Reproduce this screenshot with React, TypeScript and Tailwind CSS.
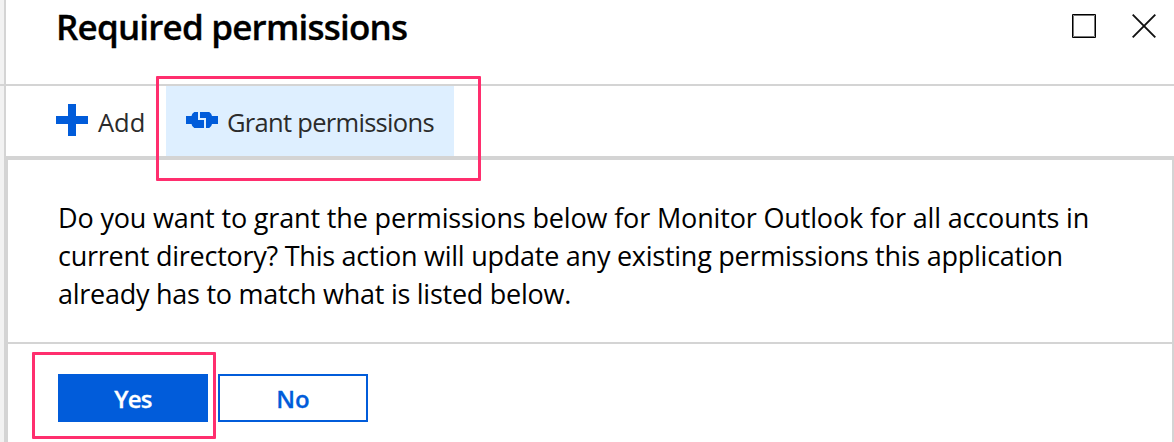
function PlusIcon() {
  return (
    <svg className="size-8 shrink-0" viewBox="0 0 32 32" fill="#015cda">
      <path d="M12 0h8v12h12v8H20v12h-8V20H0v-8h12z" />
    </svg>
  );
}

function ConnectIcon() {
  return (
    <svg className="h-4 w-8 shrink-0" viewBox="0 0 32 16" fill="#015cda">
      <path d="M0 4h5.500Q5.800 1.500 8.300 0H12v8h6v8H8.300Q5.800 14.500 5.500 12H0z" />
      <path d="M14 0h9.200Q25.700 1.500 26 4h6v8h-6Q25.700 14.500 23.200 16H20V6h-6z" />
    </svg>
  );
}

const message = [
  { text: "Do you want to grant the permissions below for Monitor Outlook for all accounts in", spacing: "tracking-[-0.156px]" },
  { text: "current directory? This action will update any existing permissions this application", spacing: "tracking-[-0.25px]" },
  { text: "already has to match what is listed below.", spacing: "tracking-[-0.26px]" },
];

export default function App() {
  return (
    <div className="relative flex h-[442px] w-[1174px] overflow-hidden bg-white font-['Open_Sans','Noto_Sans',sans-serif] text-black">
      <div className="flex w-1 shrink-0 flex-col bg-[#f2f2f2]">
        <div className="mt-[84px] h-0.5 bg-[#d4d4d4]" />
      </div>
      <main className="flex min-w-0 flex-1 flex-col border-l-2 border-[#d4d4d4]">
        <header className="flex h-[86px] shrink-0 items-start justify-between border-b-2 border-[#d4d4d4] pl-[50px] pr-[18px]">
          <h1 className="mt-[3px] whitespace-nowrap text-[35px] font-semibold leading-[48px] tracking-[-0.8px] [-webkit-text-stroke:0.3px_#000]">
            Required permissions
          </h1>
          <div className="mt-[14px] flex gap-[36px]">
            <button aria-label="Maximize">
              <svg className="size-6" viewBox="0 0 24 24" fill="none">
                <path d="M1.500 1.500h21v21h-21z" stroke="#777" />
                <path d="M.5.5h23v23H.5z" stroke="#000" />
              </svg>
            </button>
            <button aria-label="Close">
              <svg className="size-6" viewBox="0 0 24 24" fill="none" stroke="#111" strokeWidth="1.900">
                <path d="M.7.7l22.600 22.600M23.300.7.7 23.300" />
              </svg>
            </button>
          </div>
        </header>
        <nav className="flex h-[70px] shrink-0 text-[25.5px] leading-[36px] text-[#2b2b2b]">
          <button className="flex w-[160px] items-start pl-[50px] pt-[18px]">
            <PlusIcon />
            <span className="ml-[10px]">Add</span>
          </button>
          <button className="flex w-[288px] items-start whitespace-nowrap bg-[#deefff] pl-5 pt-[18px]">
            <span className="mt-2 flex">
              <ConnectIcon />
            </span>
            <span className="ml-[9px] tracking-[-0.7px]">Grant permissions</span>
          </button>
        </nav>
        <section className="flex flex-1 flex-col border-l-2 border-r-2 border-t-4 border-[#d4d4d4]">
          <div className="h-[184px] shrink-0 border-b-2 border-[#d4d4d4] pl-[50px] pt-[39px] text-[27px] leading-[38px]">
            {message.map((line) => (
              <p key={line.text} className={line.spacing + " whitespace-nowrap"}>
                {line.text}
              </p>
            ))}
          </div>
          <div className="flex gap-[10px] pl-[50px] pt-[30px] text-[24px] font-semibold leading-[46px]">
            <button className="h-12 w-[150px] bg-[#015cda] pt-0.5 tracking-[-0.7px] text-white [-webkit-text-stroke:0.3px_#fff]">Yes</button>
            <button className="flex h-12 w-[150px] items-center justify-center border-2 border-[#015cda] pt-0.5 text-[#015cda] [-webkit-text-stroke:0.3px_#015cda]">No</button>
          </div>
        </section>
      </main>
      <div className="pointer-events-none absolute left-[156px] top-[76px] h-[105px] w-[325px] rounded-[1px] border-[3px] border-[#ff2e6e]" />
      <div className="pointer-events-none absolute left-[32px] top-[352px] h-[87px] w-[184px] rounded-[1px] border-[3px] border-[#ff2e6e]" />
    </div>
  );
}
